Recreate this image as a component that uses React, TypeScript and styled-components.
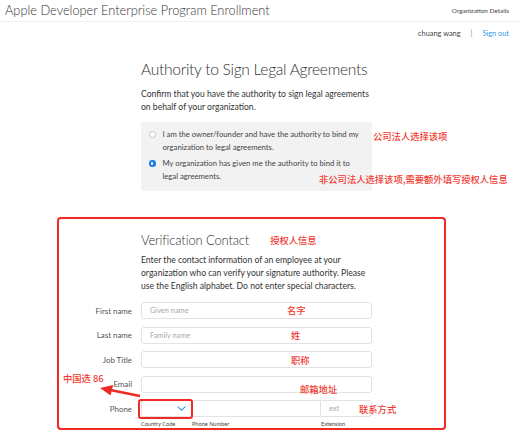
import React from "react";
import styled, { createGlobalStyle } from "styled-components";

const GlobalStyle = createGlobalStyle`
  html, body {
    margin: 0;
    padding: 0;
    background: #fff;
  }
  body {
    font-family: Lato, "Open Sans", "Noto Sans CJK SC", sans-serif;
    color: #333;
  }
  * {
    box-sizing: border-box;
  }
`;

const Page = styled.div`
  width: 520px;
  height: 443px;
  overflow: hidden;
  position: relative;
`;

const Header = styled.header`
  height: 22px;
  display: flex;
  align-items: center;
  justify-content: space-between;
  padding: 0 11px 2px 5px;
  border-bottom: 1px solid #efefef;
`;

const Brand = styled.h1`
  margin: 0;
  font-size: 12.8px;
  font-weight: 300;
  color: #333;
`;

const HeaderLink = styled.span`
  font-size: 6.4px;
  color: #444;
  margin-top: 2px;
`;

const UserBar = styled.div`
  display: flex;
  justify-content: flex-end;
  align-items: center;
  gap: 10px;
  padding-right: 11px;
  margin-top: 7px;
  font-size: 7.4px;
  color: #444;
  line-height: 10px;
`;

const Divider = styled.span`
  color: #888;
`;

const SignOut = styled.a`
  color: #2d9be2;
  text-decoration: none;
`;

const Main = styled.main`
  padding-left: 141px;
  margin-top: 20px;
`;

const Heading = styled.h2<{ $size: number; $track: number }>`
  margin: 0;
  font-size: ${(p) => p.$size}px;
  letter-spacing: ${(p) => p.$track}px;
  font-weight: 300;
  color: #333;
  line-height: 20px;
  display: flex;
  align-items: center;
  gap: 21px;
`;

const Lead = styled.p`
  width: 232px;
  margin: 9px 0 0;
  font-size: 8.6px;
  line-height: 13.3px;
  color: #333;
`;

const OptionsRow = styled.div`
  position: relative;
  display: flex;
  align-items: flex-start;
  margin-top: 7px;
`;

const OptionBox = styled.div`
  width: 231px;
  background: #f2f2f2;
  border-radius: 2px;
  padding: 6px 8px 7px 8px;
  display: flex;
  flex-direction: column;
  gap: 2px;
`;

const Option = styled.label`
  display: flex;
  align-items: flex-start;
  gap: 7px;
  font-size: 7.7px;
  line-height: 13.5px;
  color: #444;
`;

const Radio = styled.span<{ $checked?: boolean }>`
  flex: none;
  width: 6.5px;
  height: 6.5px;
  margin-top: 3.5px;
  border-radius: 50%;
  background: ${(p) => (p.$checked ? "#1f7fe6" : "#fff")};
  border: ${(p) => (p.$checked ? "none" : "0.8px solid #c4c4c4")};
  display: flex;
  align-items: center;
  justify-content: center;
  &::after {
    content: "";
    display: ${(p) => (p.$checked ? "block" : "none")};
    width: 2.4px;
    height: 2.4px;
    border-radius: 50%;
    background: #fff;
  }
`;

const Note = styled.span<{ $size?: number }>`
  font-family: "Noto Sans CJK SC", sans-serif;
  font-size: ${(p) => p.$size ?? 9.3}px;
  font-weight: 500;
  letter-spacing: 0;
  color: #f23b32;
  line-height: 12px;
  white-space: nowrap;
`;

const SideNote = styled(Note)`
  margin-top: 8px;
  margin-left: 1px;
`;

const OverNote = styled(Note)<{ $left: number; $top: number }>`
  position: absolute;
  left: ${(p) => p.$left}px;
  top: ${(p) => p.$top}px;
`;

const Highlight = styled.section`
  position: relative;
  margin: 26px 0 0 57px;
  width: 389px;
  border: 2px solid #f12a24;
  border-radius: 4px;
  box-shadow: 0 0 1px rgba(0, 0, 0, 0.25);
  padding: 11px 0 0;
`;

const Intro = styled.div`
  padding-left: 82px;
`;

const IntroLead = styled(Lead)`
  margin-top: 4px;
`;

const Form = styled.div`
  margin-top: 9px;
  display: grid;
  grid-template-columns: 73px 231px;
  column-gap: 9px;
  row-gap: 7.5px;
  align-items: center;
`;

const Label = styled.span`
  text-align: right;
  font-size: 7.9px;
  color: #555;
`;

const Field = styled.div`
  position: relative;
  display: flex;
  height: 17px;
`;

const Input = styled.input<{ $width?: number }>`
  width: ${(p) => (p.$width ? `${p.$width}px` : "100%")};
  height: 17px;
  margin: 0;
  padding: 0 0 0 8px;
  border: 1px solid #e2e2e2;
  border-radius: 3px;
  background: #fff;
  font-family: Lato, "Open Sans", sans-serif;
  font-size: 7.4px;
  color: #333;
  outline: none;
  &::placeholder {
    color: #a8a8a8;
  }
`;

const PhoneInput = styled(Input)`
  border-radius: 0;
  border-right: none;
`;

const ExtInput = styled(Input)`
  border-radius: 0 3px 3px 0;
`;

const CountrySelect = styled.div`
  position: relative;
  width: 50px;
  height: 17px;
  border: 1px solid #e2e2e2;
  border-right: none;
  border-radius: 3px 0 0 3px;
  display: flex;
  align-items: center;
  justify-content: flex-end;
  padding-right: 5px;
  &::after {
    content: "";
    position: absolute;
    inset: -2px -2px -3px -4px;
    border: 2px solid #f12a24;
    border-radius: 3px;
  }
`;

const SubLabels = styled.div`
  grid-column: 2;
  display: flex;
  margin-top: -5px;
  font-size: 5.6px;
  color: #444;
  line-height: 8px;
`;

const SubLabel = styled.span<{ $width?: number }>`
  width: ${(p) => (p.$width ? `${p.$width}px` : "auto")};
`;

const Arrow = styled.svg`
  position: absolute;
  left: 36px;
  top: 163px;
`;

const Chevron = () => (
  <svg width="9" height="5" viewBox="0 0 9 5">
    <path d="M0.6 0.6 L4.5 4.2 L8.4 0.6" fill="none" stroke="#3b9ad9" strokeWidth="1.1" />
  </svg>
);

export default function App() {
  return (
    <Page>
      <GlobalStyle />
      <Header>
        <Brand>Apple Developer Enterprise Program Enrollment</Brand>
        <HeaderLink>Organization Details</HeaderLink>
      </Header>
      <UserBar>
        <span>chuang wang</span>
        <Divider>|</Divider>
        <SignOut href="#">Sign out</SignOut>
      </UserBar>

      <Main>
        <Heading $size={15.6} $track={-0.3}>
          Authority to Sign Legal Agreements
        </Heading>
        <Lead>
          Confirm that you have the authority to sign legal agreements on behalf of your
          organization.
        </Lead>
        <OptionsRow>
          <OptionBox>
            <Option>
              <Radio />
              <span>
                I am the owner/founder and have the authority to bind my organization to legal
                agreements.
              </span>
            </Option>
            <Option>
              <Radio $checked />
              <span>
                My organization has given me the authority to bind it to legal agreements.
              </span>
            </Option>
          </OptionBox>
          <SideNote>公司法人选择该项</SideNote>
          <OverNote $left={178} $top={51}>
            非公司法人选择该项,需要额外填写授权人信息
          </OverNote>
        </OptionsRow>
      </Main>

      <Highlight>
        <Intro>
          <Heading $size={13} $track={-0.15}>
            Verification Contact
            <Note>授权人信息</Note>
          </Heading>
          <IntroLead>
            Enter the contact information of an employee at your organization who can verify
            your signature authority. Please use the English alphabet. Do not enter special
            characters.
          </IntroLead>
        </Intro>

        <Form>
          <Label>First name</Label>
          <Field>
            <Input placeholder="Given name" readOnly />
            <OverNote $left={146} $top={2}>名字</OverNote>
          </Field>

          <Label>Last name</Label>
          <Field>
            <Input placeholder="Family name" readOnly />
            <OverNote $left={150} $top={2}>姓</OverNote>
          </Field>

          <Label>Job Title</Label>
          <Field>
            <Input readOnly />
            <OverNote $left={150} $top={3}>职称</OverNote>
          </Field>

          <Label>Email</Label>
          <Field>
            <Input readOnly />
            <OverNote $left={159} $top={7}>邮箱地址</OverNote>
          </Field>

          <Label>Phone</Label>
          <Field>
            <CountrySelect>
              <Chevron />
            </CountrySelect>
            <PhoneInput $width={129} readOnly />
            <ExtInput $width={52} placeholder="ext" readOnly />
            <OverNote $left={218} $top={3}>联系方式</OverNote>
          </Field>

          <SubLabels>
            <SubLabel $width={51}>Country Code</SubLabel>
            <SubLabel $width={129}>Phone Number</SubLabel>
            <SubLabel>Extension</SubLabel>
          </SubLabels>
        </Form>

        <OverNote $left={4} $top={153}>中国选 86</OverNote>
        <Arrow width="48" height="18" viewBox="0 0 48 18">
          <line x1="45" y1="14" x2="16.5" y2="8.3" stroke="#ee2a24" strokeWidth="2.6" />
          <polygon points="5,6 18.2,3 15.6,13.4" fill="#ee2a24" />
        </Arrow>
      </Highlight>
    </Page>
  );
}
